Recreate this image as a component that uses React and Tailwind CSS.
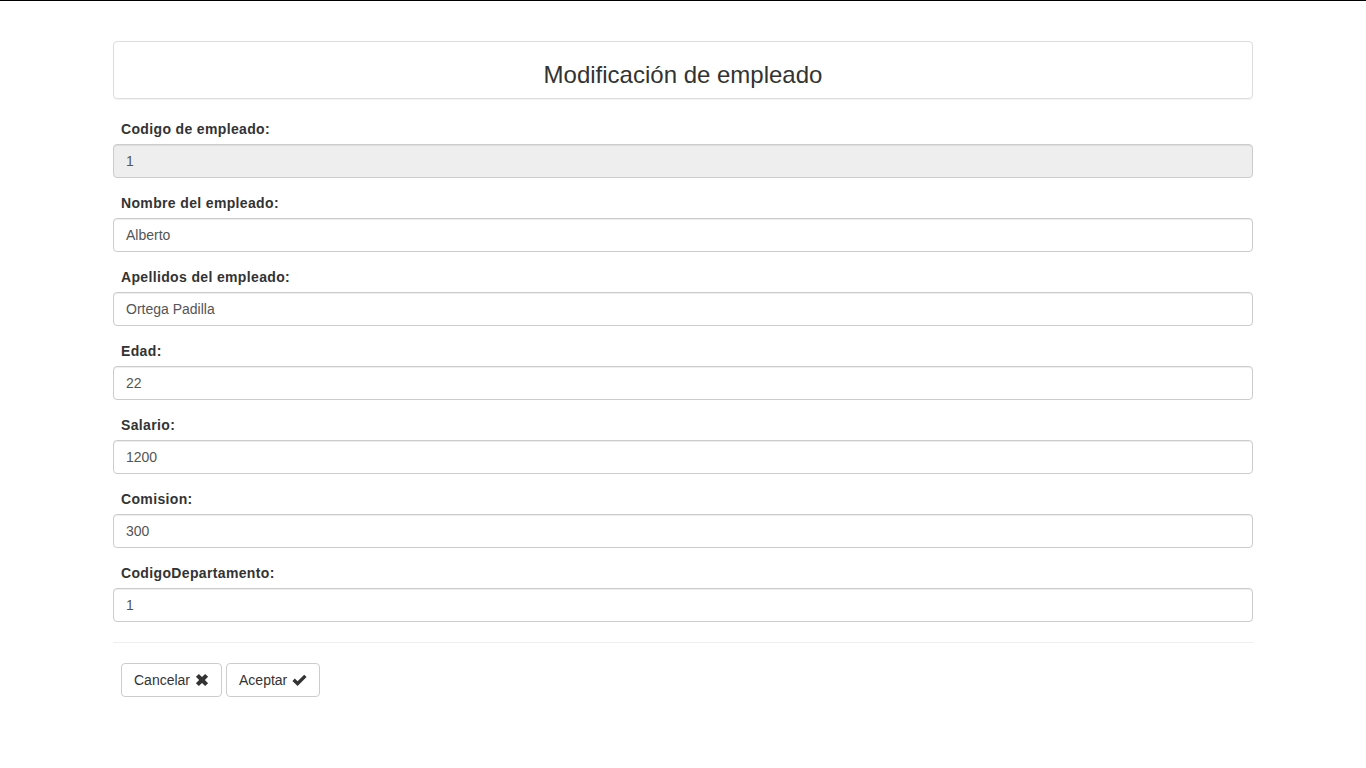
import React from 'react';

const fields = [
  { label: 'Codigo de empleado:', value: '1', disabled: true },
  { label: 'Nombre del empleado:', value: 'Alberto' },
  { label: 'Apellidos del empleado:', value: 'Ortega Padilla' },
  { label: 'Edad:', value: '22' },
  { label: 'Salario:', value: '1200' },
  { label: 'Comision:', value: '300' },
  { label: 'CodigoDepartamento:', value: '1' },
];

const RemoveIcon = () => (
  <svg width="14" height="14" viewBox="0 0 12 12" className="inline-block">
    <path d="M0.8 3.3 L3.3 0.8 L6 3.5 L8.7 0.8 L11.2 3.3 L8.5 6 L11.2 8.7 L8.7 11.2 L6 8.5 L3.3 11.2 L0.8 8.7 L3.5 6 Z" fill="#333" />
  </svg>
);

const OkIcon = () => (
  <svg width="15" height="13" viewBox="0 0 14 12" className="inline-block">
    <path d="M0.4 6.4 L2.6 4.2 L5.2 6.8 L11.4 0.6 L13.6 2.8 L5.2 11.2 Z" fill="#333" />
  </svg>
);

export default function App() {
  return (
    <div className="min-h-screen bg-white border-t border-black text-[14px] text-[#333]" style={{ fontFamily: '"Liberation Sans", Arial, sans-serif' }}>
      <div className="w-[1170px] mx-auto px-[15px] pt-[40px]">
        <div className="border border-[#ddd] rounded-[4px] shadow-[0_1px_1px_rgba(0,0,0,0.05)] mb-[20px] pt-[20px] pb-[10px] text-center">
          <h3 className="text-[24px] leading-[26px] text-[#333]">Modificación de empleado</h3>
        </div>

        <form>
          {fields.map((f) => (
            <div key={f.label} className="mb-[15px]">
              <label className="block pl-[8px] mb-[5px] font-bold leading-[20px] tracking-[0.35px]">{f.label}</label>
              <input
                type="text"
                defaultValue={f.value}
                disabled={f.disabled}
                className={`block w-full h-[34px] px-[12px] py-[6px] text-[14px] text-[#555] border border-[#ccc] rounded-[4px] shadow-[inset_0_1px_1px_rgba(0,0,0,0.075)] outline-none ${f.disabled ? 'bg-[#eee]' : 'bg-white'}`}
              />
            </div>
          ))}

          <hr className="mt-[20px] mb-[20px] border-t border-[#eee]" />

          <div className="flex gap-[4px] pl-[8px]">
            <button type="button" className="h-[34px] px-[12px] flex items-center gap-[5px] bg-white border border-[#ccc] rounded-[4px] text-[14px] text-[#333]">
              Cancelar <RemoveIcon />
            </button>
            <button type="button" className="h-[34px] px-[12px] flex items-center gap-[5px] bg-white border border-[#ccc] rounded-[4px] text-[14px] text-[#333]">
              Aceptar <OkIcon />
            </button>
          </div>
        </form>
      </div>
    </div>
  );
}
